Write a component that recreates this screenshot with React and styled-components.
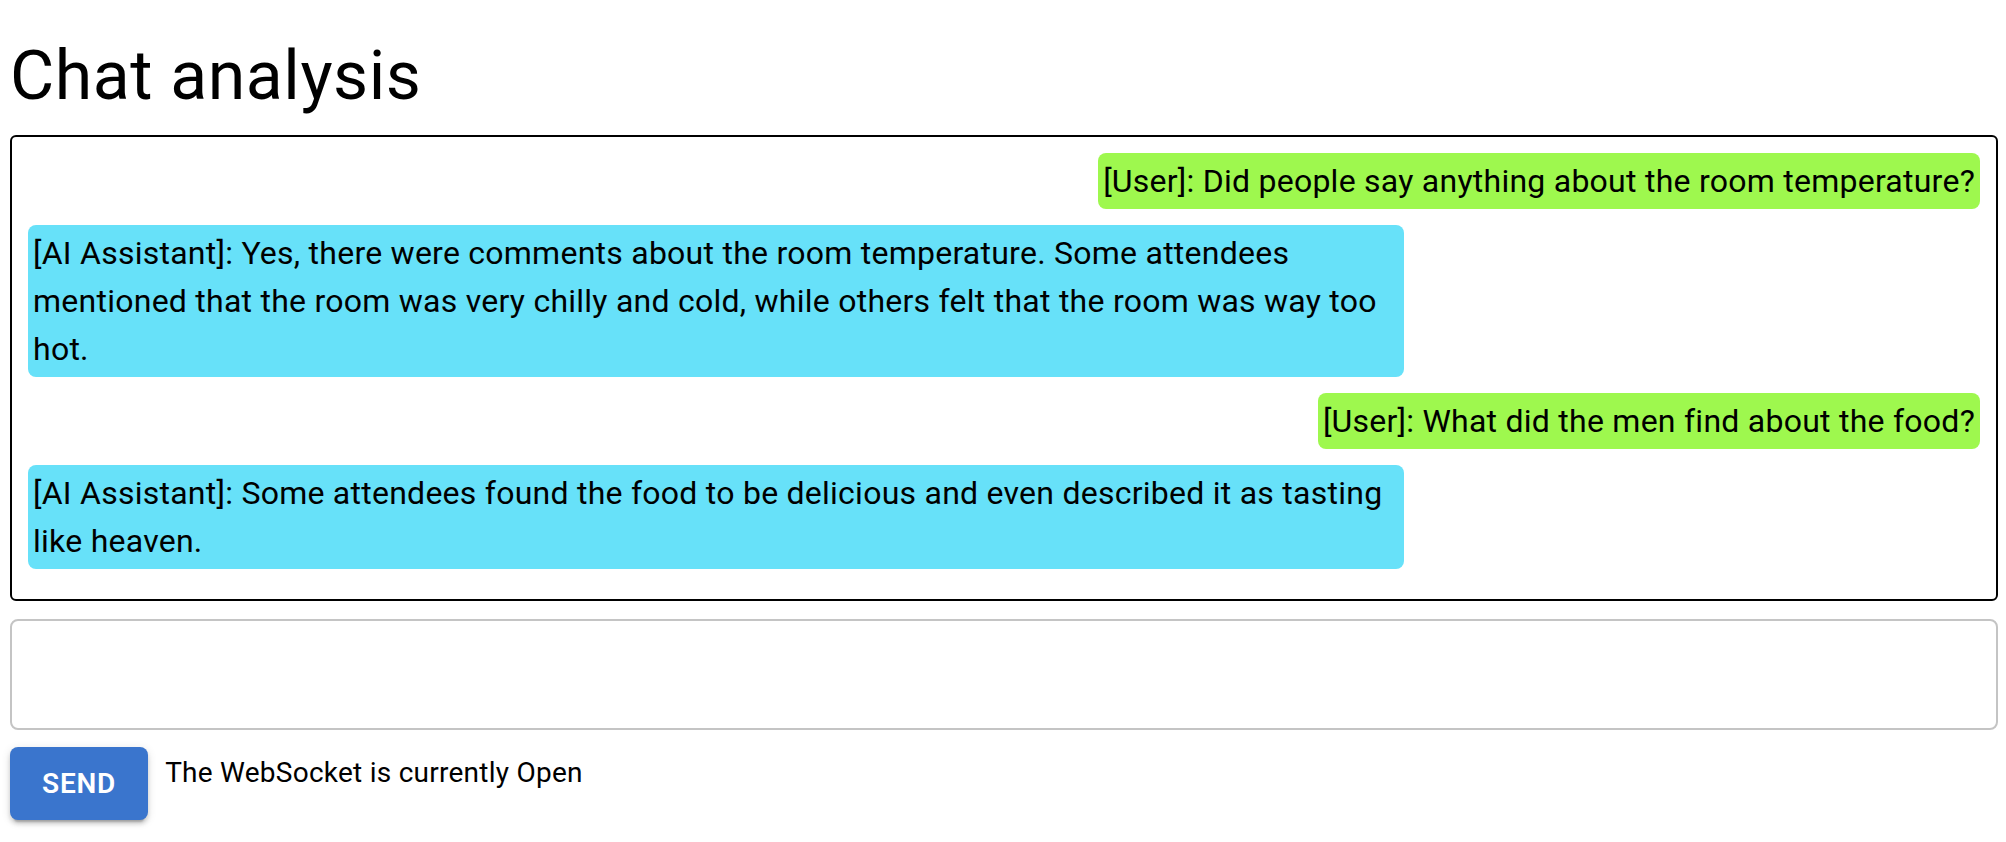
import React, { useState } from 'react';
import styled, { createGlobalStyle } from 'styled-components';

const GlobalStyle = createGlobalStyle`
  body{
    margin: 0;
    background: #fff;
    font-family: Roboto, "Liberation Sans", Arial, sans-serif;
    color: #000;
  }
`;

const Page = styled.div`
  padding: 34px 8px 20px 10px;
`;

const Title = styled.h1`
  margin: 0 0 17px 0;
  font-size: 68px;
  font-weight: 400;
  line-height: 84px;
  letter-spacing: 0.5px;
`;

const ChatBox = styled.div`
  display: flex;
  flex-direction: column;
  padding: 16px 16px 0 16px;
  border: 2px solid #000;
  border-radius: 6px;
`;

const Row = styled.div`
  display: flex;
  justify-content: ${({ $fromUser }) => ($fromUser ? 'flex-end' : 'flex-start')};
  margin-bottom: 16px;
  &:last-child{
    margin-bottom: 30px;
  }
`;

const Bubble = styled.div`
  max-width: 70%;
  padding: 4px 5px;
  border-radius: 8px;
  background-color: ${({ $fromUser }) => ($fromUser ? '#9ef84e' : '#67e1f9')};
  font-size: 32px;
  line-height: 48px;
  letter-spacing: 0.25px;
  color: #000;
`;

const Input = styled.textarea`
  display: block;
  box-sizing: border-box;
  width: 100%;
  height: 111px;
  margin: 18px 0 17px 0;
  padding: 12px 16px;
  border: 2px solid #c4c4c4;
  border-radius: 8px;
  font-family: Roboto, "Liberation Sans", Arial, sans-serif;
  font-size: 32px;
  line-height: 48px;
  resize: none;
  outline: none;
`;

const Footer = styled.div`
  display: flex;
  align-items: flex-start;
  gap: 17px;
`;

const SendButton = styled.button`
  padding: 12px 32px;
  border: none;
  border-radius: 8px;
  background-color: #3a75cd;
  color: #fff;
  font-family: Roboto, "Liberation Sans", Arial, sans-serif;
  font-size: 28px;
  font-weight: 600;
  line-height: 49px;
  letter-spacing: 0.8px;
  text-transform: uppercase;
  box-shadow: 0 6px 2px -4px rgba(0,0,0,0.2), 0 4px 4px 0 rgba(0,0,0,0.14), 0 2px 10px 0 rgba(0,0,0,0.12);
  cursor: pointer;
`;

const Status = styled.p`
  margin: 0;
  padding-top: 5px;
  font-size: 28px;
  line-height: 42px;
  letter-spacing: 0.25px;
`;

const messages = [
  { user: true, text: '[User]: Did people say anything about the room temperature?' },
  {
    user: false,
    text: '[AI Assistant]: Yes, there were comments about the room temperature. Some attendees mentioned that the room was very chilly and cold, while others felt that the room was way too hot.'
  },
  { user: true, text: '[User]: What did the men find about the food?' },
  {
    user: false,
    text: '[AI Assistant]: Some attendees found the food to be delicious and even described it as tasting like heaven.'
  }
];

export default function App() {
  const [draft, setDraft] = useState('');

  return (
    <Page>
      <GlobalStyle />
      <Title>Chat analysis</Title>
      <ChatBox>
        {messages.map((m, i) => (
          <Row key={i} $fromUser={m.user}>
            <Bubble $fromUser={m.user}>{m.text}</Bubble>
          </Row>
        ))}
      </ChatBox>
      <Input value={draft} onChange={(e) => setDraft(e.target.value)} />
      <Footer>
        <SendButton>Send</SendButton>
        <Status>The WebSocket is currently Open</Status>
      </Footer>
    </Page>
  );
}
